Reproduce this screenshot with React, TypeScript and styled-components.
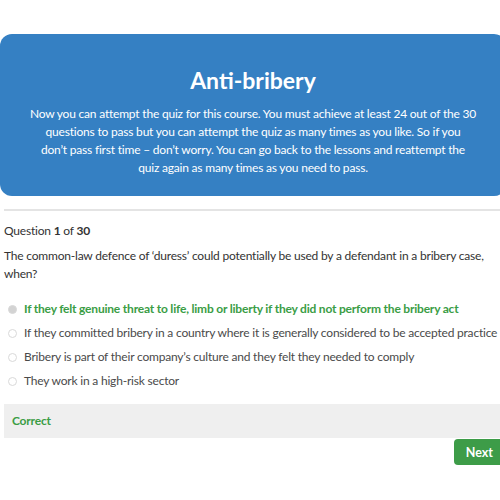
import React from "react";
import styled, { createGlobalStyle } from "styled-components";

const Global = createGlobalStyle`
  html, body { margin: 0; padding: 0; background: #fff; }
  body { font-family: Lato, "Noto Sans", sans-serif; overflow: hidden; }
`;

const Page = styled.div`
  width: 500px;
  height: 500px;
  overflow: hidden;
  padding-top: 34px;
  box-sizing: border-box;
`;

const Hero = styled.section`
  width: 506px;
  height: 162px;
  box-sizing: border-box;
  background: #3580c3;
  border-radius: 12px;
  color: #fff;
  text-align: center;
  padding: 30px 20px 0;
`;

const Title = styled.h1`
  margin: 0 0 9px;
  font-size: 23px;
  line-height: 32px;
  font-weight: 700;
`;

const Intro = styled.p`
  margin: 0;
  font-size: 12px;
  letter-spacing: -0.2px;
  line-height: 18px;
`;

const Body = styled.div`
  padding: 13px 0 0 4px;
  color: #333;
  font-size: 12px;
  letter-spacing: -0.2px;
  line-height: 18px;
`;

const Divider = styled.hr`
  margin: 0;
  border: 0;
  border-top: 2px solid #e4e4e4;
`;

const Counter = styled.div`
  margin-top: 11px;
  b { font-weight: 700; }
`;

const Question = styled.p`
  margin: 7px 0 0;
`;

const Options = styled.ul`
  list-style: none;
  margin: 17px 0 0;
  padding: 0 0 0 4px;
  display: flex;
  flex-direction: column;
  gap: 6px;
`;

const Option = styled.li<{ $correct?: boolean }>`
  display: flex;
  align-items: center;
  gap: 7px;
  white-space: nowrap;
  color: ${(p) => (p.$correct ? "#3a9d45" : "#4a4a4a")};
  font-weight: ${(p) => (p.$correct ? 700 : 400)};
`;

const Radio = styled.span<{ $checked?: boolean }>`
  width: 7px;
  height: 7px;
  border-radius: 50%;
  flex: none;
  border: 1px solid #d9d9d9;
  background: ${(p) => (p.$checked ? "#d3d3d3" : "#fff")};
`;

const Feedback = styled.div`
  margin-top: 14px;
  height: 34px;
  background: #efefef;
  display: flex;
  align-items: center;
  padding-left: 8px;
  color: #3a9d45;
  font-weight: 700;
`;

const Actions = styled.div`
  display: flex;
  justify-content: flex-end;
  margin-top: 1px;
  margin-right: -10px;
`;

const NextButton = styled.button`
  font-family: inherit;
  background: #3d9c48;
  color: #fff;
  border: 0;
  border-radius: 4px;
  height: 26px;
  padding: 0 17px 0 12px;
  font-size: 12.5px;
  font-weight: 700;
`;

const options = [
  "If they felt genuine threat to life, limb or liberty if they did not perform the bribery act",
  "If they committed bribery in a country where it is generally considered to be accepted practice",
  "Bribery is part of their company’s culture and they felt they needed to comply",
  "They work in a high-risk sector",
];

export default function App() {
  return (
    <Page>
      <Global />
      <Hero>
        <Title>Anti-bribery</Title>
        <Intro>
          Now you can attempt the quiz for this course. You must achieve at least 24 out of the 30
          <br />
          questions to pass but you can attempt the quiz as many times as you like. So if you
          <br />
          don’t pass first time – don’t worry. You can go back to the lessons and reattempt the
          <br />
          quiz again as many times as you need to pass.
        </Intro>
      </Hero>
      <Body>
        <Divider />
        <Counter>
          Question <b>1</b> of <b>30</b>
        </Counter>
        <Question>
          The common-law defence of ‘duress’ could potentially be used by a defendant in a bribery case,
          when?
        </Question>
        <Options>
          {options.map((o, i) => (
            <Option key={o} $correct={i === 0}>
              <Radio $checked={i === 0} />
              {o}
            </Option>
          ))}
        </Options>
        <Feedback>Correct</Feedback>
        <Actions>
          <NextButton>Next</NextButton>
        </Actions>
      </Body>
    </Page>
  );
}
